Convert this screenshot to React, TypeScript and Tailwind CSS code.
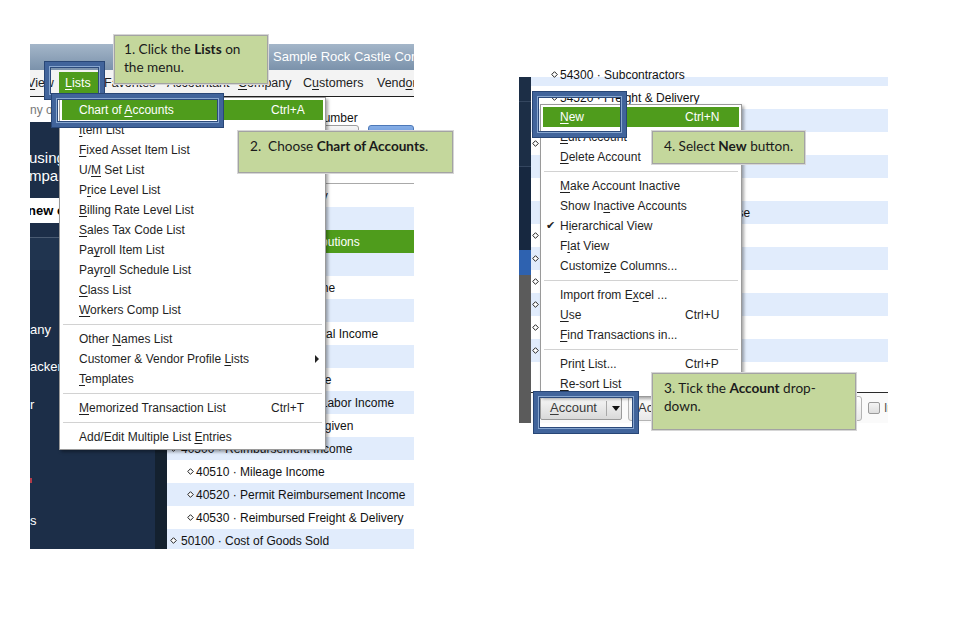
import React from 'react';

type Item = { l?: string; k?: string; sep?: boolean; hi?: boolean; check?: boolean; sub?: boolean };

// label with "_" before the mnemonic letter
function Mn({ label }: { label: string }) {
  const i = label.indexOf('_');
  if (i < 0) return <span>{label}</span>;
  return (
    <span className="whitespace-pre">
      {label.slice(0, i)}
      <span className="underline underline-offset-[2px]">{label[i + 1]}</span>
      {label.slice(i + 2)}
    </span>
  );
}

const Dia = () => (
  <svg width="7" height="7" viewBox="0 0 7 7" className="shrink-0">
    <path d="M3.5 0.7 L6.3 3.5 L3.5 6.3 L0.7 3.5 Z" fill="#fff" stroke="#222" strokeWidth="1" />
  </svg>
);

type RowData = { t: string; s?: number; g?: boolean };

function Row({ r, blue, top }: { r: RowData; blue: boolean; top: string }) {
  const bg = r.g ? 'bg-[#4f9c1c] text-white' : blue ? 'bg-[#e1ecfc] text-[#111]' : 'bg-white text-[#111]';
  return (
    <div className={`h-[23px] shrink-0 flex items-center whitespace-nowrap text-[12px] ${bg}`}>
      {r.s === 2 ? (
        <span className="ml-[34px] flex items-center"><Dia /><span className="ml-[2px]">{r.t}</span></span>
      ) : r.s === 1 ? (
        <span className="ml-[20px] flex items-center"><Dia /><span className="ml-[2px]">{r.t}</span></span>
      ) : (
        <span className={`${top} flex items-center`}><Dia /><span className="ml-[4px]">{r.t}</span></span>
      )}
    </div>
  );
}

function Menu({ items, pos, kx }: { items: Item[]; pos: string; kx: string }) {
  return (
    <div className={`absolute ${pos} bg-white border border-[#9a9a9a] shadow-[2px_2px_3px_rgba(0,0,0,0.35)] py-[2px] text-[12px] whitespace-nowrap`}>
      {items.map((it, i) =>
        it.sep ? (
          <div key={i} className="h-[9px] flex items-center px-[3px]">
            <div className="h-px w-full bg-[#d2d2d2]" />
          </div>
        ) : (
          <div
            key={i}
            className={`relative h-[20px] mx-[2px] flex items-center pl-[17px] ${it.hi ? 'bg-[#4f9c1c] text-white' : 'text-[#1f1f1f]'}`}
          >
            {it.check && <span className="absolute left-[3px] text-[11px] font-['DejaVu_Sans',sans-serif]">✔</span>}
            <Mn label={it.l || ''} />
            {it.k && <span className={`absolute ${kx}`}>{it.k}</span>}
            {it.sub && (
              <span className="absolute left-[253px] w-0 h-0 border-y-[4px] border-y-transparent border-l-[4px] border-l-[#222]" />
            )}
          </div>
        )
      )}
    </div>
  );
}

function Callout({ pos, children }: { pos: string; children: React.ReactNode }) {
  return (
    <div
      className={`absolute ${pos} bg-[#c4d79c] border border-[#a3a3a3] shadow-[0_0_0_1px_#d6d6d6] font-['Lato','Open_Sans',sans-serif] text-[13.6px] leading-[18px] text-[#1b1b1b]`}
    >
      {children}
    </div>
  );
}

function HiBox({ pos }: { pos: string }) {
  return (
    <div
      className={`absolute ${pos} border-[4px] border-[#41649b] shadow-[0_0_0_1px_#284676,inset_0_0_0_1px_#88a7d0,inset_0_0_0_2px_#2c4a7b]`}
    />
  );
}

const listsMenu: Item[] = [
  { l: 'Chart of _Accounts', k: 'Ctrl+A', hi: true },
  { l: '_Item List' },
  { l: '_Fixed Asset Item List' },
  { l: 'U/_M Set List' },
  { l: 'P_rice Level List' },
  { l: '_Billing Rate Level List' },
  { l: '_Sales Tax Code List' },
  { l: 'Pa_yroll Item List' },
  { l: 'Payr_oll Schedule List' },
  { l: '_Class List' },
  { l: '_Workers Comp List' },
  { sep: true },
  { l: 'Other _Names List' },
  { l: 'Customer & Vendor Profile _Lists', sub: true },
  { l: '_Templates' },
  { sep: true },
  { l: '_Memorized Transaction List', k: 'Ctrl+T' },
  { sep: true },
  { l: 'Add/Edit Multiple List _Entries' },
];

const accountMenu: Item[] = [
  { l: '_New', k: 'Ctrl+N', hi: true },
  { l: '_Edit Account' },
  { l: '_Delete Account' },
  { sep: true },
  { l: '_Make Account Inactive' },
  { l: 'Show In_active Accounts' },
  { l: 'H_ierarchical View', check: true },
  { l: 'F_lat View' },
  { l: 'Customi_ze Columns...' },
  { sep: true },
  { l: 'Import from E_xcel ...' },
  { l: '_Use', k: 'Ctrl+U' },
  { l: '_Find Transactions in...' },
  { sep: true },
  { l: 'Prin_t List...', k: 'Ctrl+P' },
  { l: '_Re-sort List' },
];

const leftRows: RowData[] = [
  { t: '30000 · Opening Bal Equity' },
  { t: '30100 · Capital Stock' },
  { t: '32000 · Shareholder Distributions', g: true },
  { t: '40000 · Income' },
  { t: '40100 · Construction Income' },
  { t: '40110 · Design Income', s: 1 },
  { t: '40120 · Equipment Rental Income', s: 1 },
  { t: '40130 · Labor Income', s: 1 },
  { t: '40140 · Materials Income', s: 1 },
  { t: '40150 · Subcontracted Labor Income', s: 1 },
  { t: '40199 · Less Discounts given', s: 1 },
  { t: '40500 · Reimbursement Income' },
  { t: '40510 · Mileage Income', s: 1 },
  { t: '40520 · Permit Reimbursement Income', s: 1 },
  { t: '40530 · Reimbursed Freight & Delivery', s: 1 },
  { t: '50100 · Cost of Goods Sold' },
];

const rightRows: RowData[] = [
  { t: '54520 · Freight & Delivery', s: 1 },
  { t: '54599 · Less Discounts Taken', s: 1 },
  { t: '60100 · Automobile' },
  { t: '60110 · Fuel', s: 1 },
  { t: '60130 · Repairs and Maintenance', s: 1 },
  { t: '60140 · Registration and License', s: 2 },
  { t: '60400 · Bank Service Charges' },
  { t: '61700 · Computer and Internet' },
  { t: '62100 · Insurance Expense' },
  { t: '62400 · Depreciation Expense' },
  { t: '62500 · Dues and Subscriptions' },
  { t: '62700 · Equipment Rental' },
  { t: '62710 · Tools and Machinery', s: 1 },
];

function LeftPanel() {
  return (
    <div className="absolute left-[30px] top-[44px] w-[384px] h-[505px] overflow-hidden flex flex-col bg-white">
      <div className="h-[26px] shrink-0 bg-gradient-to-b from-[#a4b6c9] to-[#7b92ab] flex items-center pl-[243px] text-[13px] text-white whitespace-nowrap">
        Sample Rock Castle Construction
      </div>
      <div className="h-[27px] shrink-0 bg-[#f3f3f3] border-b border-[#1e1e1e] flex items-center text-[12.5px] text-[#1e1e1e] whitespace-nowrap">
        <span className="-ml-[3px] w-[32px] shrink-0"><Mn label="_View" /></span>
        <span className="w-[39px] h-[22px] shrink-0 bg-[#4f9c1c] text-white flex items-center pl-[6px]"><Mn label="_Lists" /></span>
        <span className="ml-[6px] w-[63px] shrink-0">Favorites</span>
        <span className="w-[71px] shrink-0">Accountant</span>
        <span className="w-[65px] shrink-0"><Mn label="_Company" /></span>
        <span className="w-[74px] shrink-0"><Mn label="C_ustomers" /></span>
        <span className="shrink-0"><Mn label="Vend_ors" /></span>
      </div>
      <div className="flex flex-1 min-h-0">
        <div className="w-[125px] shrink-0 flex flex-col">
          <div className="h-[25px] shrink-0 bg-white text-[12px] text-[#777] flex items-center whitespace-nowrap">ny or Help</div>
          <div className="flex-1 bg-[#1c2e48] flex flex-col text-white whitespace-nowrap overflow-hidden">
            <div className="mt-[27px] -ml-[1px] text-[15px] leading-[18px]">using the<br />mpany</div>
            <div className="mt-[13px] h-[25px] bg-white text-black font-bold text-[13px] flex items-center">
              <span className="-ml-[2px]">new company</span>
            </div>
            <div className="mt-[14px] h-px bg-[#4a5b72]" />
            <div className="h-[32px] bg-[#20344f]" />
            <div className="mt-[51px] text-[13px] leading-[18px]">any</div>
            <div className="mt-[19px] text-[13px] leading-[18px]">acker</div>
            <div className="mt-[20px] text-[13px] leading-[18px]">r</div>
            <div className="mt-[64px] w-[2px] h-[5px] bg-[#b23a48]" />
            <div className="mt-[29px] text-[13px] leading-[18px]">s</div>
          </div>
        </div>
        <div className="w-[12px] shrink-0 mt-[25px] bg-[#14212f]" />
        <div className="flex-1 flex flex-col min-w-0">
          <div className="h-[87px] shrink-0 bg-white border-b border-[#a9a9a9] flex flex-col">
            <div className="pt-[13px] pl-[148px] text-[12px] leading-[16px] text-[#111] whitespace-nowrap">Number</div>
            <div className="-mt-[1px] pl-[156px] flex">
              <div className="w-[37px] h-[22px] rounded-[3px] border border-[#9d9d9d] bg-gradient-to-b from-[#f6f6f6] to-[#d6d6d6]" />
              <div className="ml-[9px] w-[48px] h-[22px] rounded-[3px] border border-[#4c78b8] bg-gradient-to-b from-[#86aee6] to-[#4f82cf]" />
            </div>
          </div>
          {leftRows.map((r, i) => (
            <Row key={i} r={r} blue={i % 2 === 1} top="ml-[3px]" />
          ))}
        </div>
      </div>
    </div>
  );
}

function RightPanel() {
  return (
    <div className="absolute left-[519px] top-[70px] w-[369px] h-[353px] overflow-hidden flex bg-white">
      <div className="w-[12px] shrink-0 flex flex-col">
        <div className="h-[7px] bg-white" />
        <div className="h-[24px] bg-[#1c2e46]" />
        <div className="h-px bg-[#34465f]" />
        <div className="h-[64px] bg-[#1c2e46]" />
        <div className="h-px bg-[#34465f]" />
        <div className="h-[83px] bg-[#172840]" />
        <div className="h-[25px] bg-[#2e62b0]" />
        <div className="flex-1 bg-[#5b5b5b]" />
      </div>
      <div className="flex-1 flex flex-col min-w-0">
        <div className="flex-1 flex flex-col overflow-hidden bg-white">
          <div className="h-[16px] shrink-0 overflow-hidden flex flex-col justify-end bg-[linear-gradient(to_bottom,#ffffff_7px,#e1ecfc_7px)]">
            <div className="h-[23px] shrink-0 flex items-center whitespace-nowrap text-[12px] text-[#111]">
              <span className="ml-[20px] flex items-center"><Dia /><span className="ml-[2px]">54300 · Subcontractors</span></span>
            </div>
          </div>
          {rightRows.map((r, i) => (
            <Row key={i} r={r} blue={i % 2 === 1} top="ml-[1px]" />
          ))}
        </div>
        <div className="h-px shrink-0 bg-[#2a2a2a]" />
        <div className="h-[30px] shrink-0 bg-[#fafafa] flex items-center whitespace-nowrap">
          <div className="ml-[9px] w-[82px] h-[23px] shrink-0 rounded-[2px] border border-[#9a9a9a] bg-gradient-to-b from-[#f7f7f7] to-[#d9d9d9] flex items-center text-[13px] text-[#3a3a3a]">
            <span className="pl-[9px] w-[65px]"><Mn label="_Account" /></span>
            <span className="h-[15px] w-px bg-[#a8a8a8]" />
            <span className="ml-[5px] w-0 h-0 border-x-[4px] border-x-transparent border-t-[5px] border-t-[#111]" />
          </div>
          <div className="ml-[6px] w-[234px] h-[25px] shrink-0 rounded-[3px] border border-[#b4b4b4] bg-gradient-to-b from-[#ffffff] to-[#e8e8e8] flex items-center pl-[9px] text-[13px] text-[#3a3a3a]">
            Activities
          </div>
          <div className="ml-[6px] w-[12px] h-[12px] shrink-0 rounded-[2px] border border-[#9a9a9a] bg-gradient-to-b from-[#f4f4f4] to-[#dedede]" />
          <span className="ml-[4px] text-[12px] text-[#555]">Include inactive</span>
        </div>
      </div>
    </div>
  );
}

export default function App() {
  return (
    <div className="relative w-[966px] h-[617px] bg-white overflow-hidden font-['Liberation_Sans',Arial,sans-serif]">
      <LeftPanel />
      <RightPanel />

      <Menu items={listsMenu} pos="left-[59px] top-[97px] w-[267px]" kx="left-[209px]" />
      <Menu items={accountMenu} pos="left-[540px] top-[104px] w-[202px]" kx="left-[142px]" />

      <HiBox pos="left-[45px] top-[62px] w-[59px] h-[37px]" />
      <HiBox pos="left-[52px] top-[94px] w-[171px] h-[33px]" />
      <HiBox pos="left-[533px] top-[92px] w-[93px] h-[45px]" />
      <HiBox pos="left-[534px] top-[392px] w-[104px] h-[41px]" />

      <Callout pos="left-[114px] top-[35px] w-[154px] h-[49px] pt-[4px] pl-[9px]">
        1. Click the <b>Lists</b> on
        <br />
        the menu.
      </Callout>
      <Callout pos="left-[238px] top-[131px] w-[215px] h-[42px] pt-[5px] pl-[11px]">
        2.&nbsp; Choose <b>Chart of Accounts</b>.
      </Callout>
      <Callout pos="left-[652px] top-[373px] w-[204px] h-[57px] pt-[5px] pl-[11px]">
        3. Tick the <b>Account</b> drop-
        <br />
        down.
      </Callout>
      <Callout pos="left-[652px] top-[131px] w-[153px] h-[33px] pt-[5px] pl-[11px]">
        4. Select <b>New</b> button.
      </Callout>
    </div>
  );
}
